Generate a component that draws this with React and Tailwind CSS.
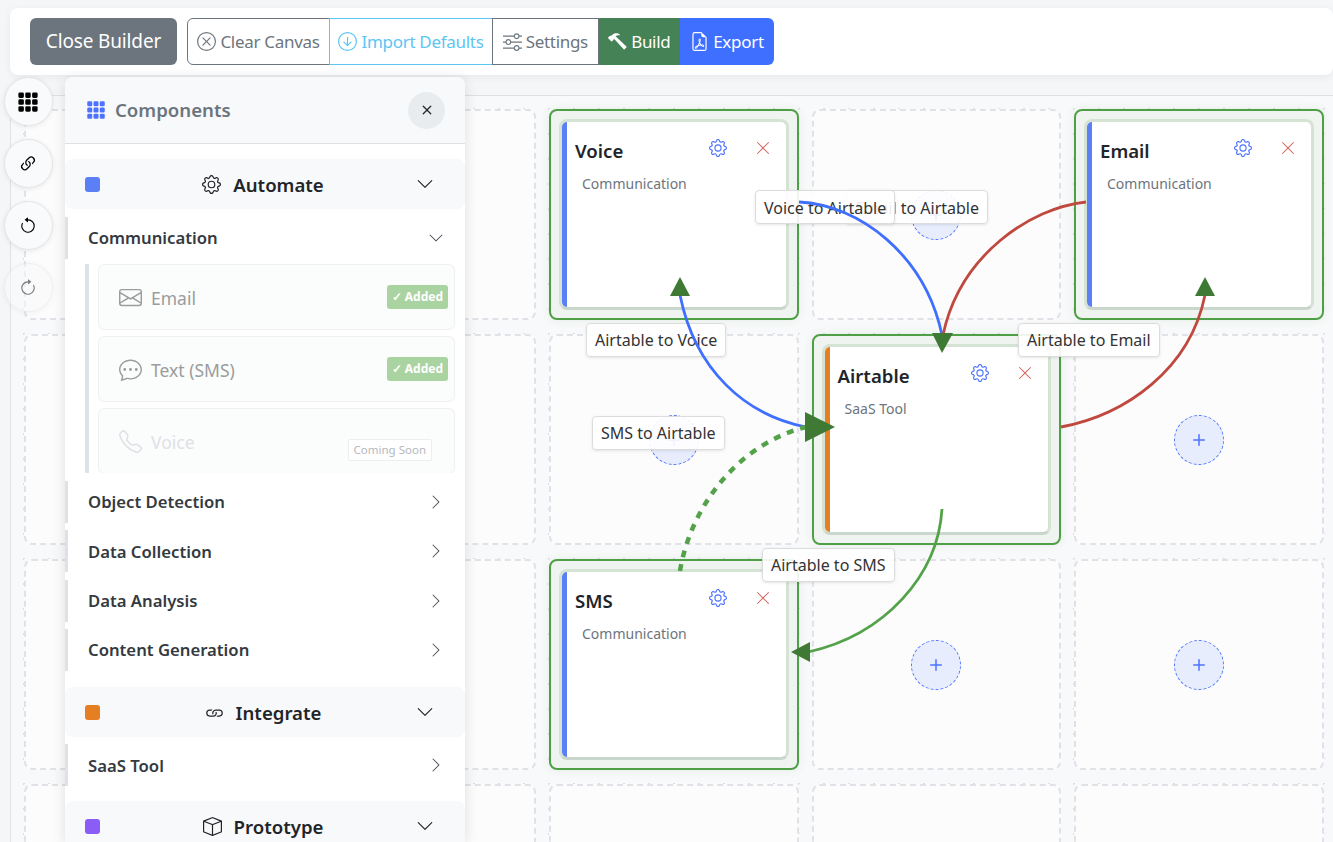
import React from 'react';
import {
  BsXCircle, BsArrowDownCircle, BsSliders, BsHammer, BsFileEarmarkPdf, BsGrid3X3GapFill,
  BsLink45Deg, BsArrowCounterclockwise, BsArrowClockwise, BsGear, BsX, BsChevronDown,
  BsChevronRight, BsEnvelope, BsChatDots, BsTelephone, BsLink, BsBox, BsPlus, BsXLg,
} from 'react-icons/bs';

const FONT = 'font-["Noto_Sans",sans-serif]';

// null = empty slot
const GRID = [
  [null, null, { name: 'Voice', cat: 'Communication', bar: 'bg-[#5b7ff5]' }, null, { name: 'Email', cat: 'Communication', bar: 'bg-[#5b7ff5]' }],
  [null, null, null, { name: 'Airtable', cat: 'SaaS Tool', bar: 'bg-[#e67e22]' }, null],
  [null, null, { name: 'SMS', cat: 'Communication', bar: 'bg-[#5b7ff5]' }, null, null],
  [null, null, null, null, null],
];

const LABELS = [
  { text: 'Email to Airtable', cls: 'right-[345px] top-[190px] pt-[6px] pb-[4px]' },
  { text: 'Voice to Airtable', cls: 'left-[755px] top-[190px] pt-[6px] pb-[4px]' },
  { text: 'Airtable to Voice', cls: 'left-[586px] top-[323px] pt-[5px] pb-[5px]' },
  { text: 'Airtable to Email', cls: 'left-[1018px] top-[323px] pt-[5px] pb-[5px]' },
  { text: 'SMS to Airtable', cls: 'left-[592px] top-[416px] pt-[5px] pb-[5px]' },
  { text: 'Airtable to SMS', cls: 'left-[762px] top-[548px] pt-[5px] pb-[5px]' },
];

function Slot({ node }) {
  if (!node) {
    return (
      <div className="flex items-center justify-center rounded-lg border-2 border-dashed border-[#e0e2e7] bg-[#fcfcfc]">
        <div className="flex h-[50px] w-[50px] items-center justify-center rounded-full border border-dashed border-[#4c72ff] bg-[#e7edfd] text-[#4c72ff]">
          <BsPlus className="h-6 w-6" />
        </div>
      </div>
    );
  }
  return (
    <div className="rounded-lg border-2 border-[#4f9f46] bg-[#eef3ee]/90 p-2 shadow-[0_0_8px_rgba(79,159,70,0.12)]">
      <div className="flex h-full overflow-hidden rounded-lg border-[3px] border-[#d4e3d4] border-b-[#c9d6cb] bg-white">
        <div className={`w-[5px] shrink-0 ${node.bar}`} />
        <div className="flex-1 pl-2 pr-[15px] pt-[14px]">
          <div className="flex items-start justify-between">
            <span className="text-[18.6px] font-semibold leading-[30px] text-[#212529]">{node.name}</span>
            <div className="flex items-center gap-[28px] pt-[3px]">
              <BsGear className="h-[18px] w-[18px] text-[#4c72ff]" />
              <BsXLg className="h-[16px] w-[16px] text-[#d4625c]" />
            </div>
          </div>
          <p className="mt-[8px] pl-[7px] text-[14px] leading-5 text-[#6c757d]">{node.cat}</p>
        </div>
      </div>
    </div>
  );
}

function SectionHeader({ color, Icon, title, iconCls }) {
  return (
    <div className="relative flex h-[50px] items-center rounded-lg bg-[#f8f9fa] pl-5 pr-[31px]">
      <span className={`h-[15px] w-[15px] rounded-[3px] ${color}`} />
      <div className="flex flex-1 items-center justify-center gap-3 pl-[10px] pt-px text-[18.6px] font-semibold text-[#212529]">
        <Icon className={iconCls} />
        {title}
      </div>
      <BsChevronDown className="h-[18px] w-[18px] text-[#212529]" />
    </div>
  );
}

function SubRow({ title, open }) {
  const Chevron = open ? BsChevronDown : BsChevronRight;
  return (
    <div className="flex h-[42px] items-center justify-between border-l-[3px] border-[#dee2e6] pl-5 pr-[21px] text-[16.7px] font-semibold text-[#343a40]">
      {title}
      <Chevron className="h-4 w-4 text-[#495057]" />
    </div>
  );
}

function ComponentItem({ Icon, name, badge, muted }) {
  return (
    <div className={`relative flex h-[66px] shrink-0 items-center rounded-md border border-[#eef0f1] bg-[#fbfcfc] pl-5 text-[17.5px] ${muted ? 'text-[#dfe1e6]' : 'text-[#9a9c9e]'}`}>
      <Icon className="mr-[9px] h-[23px] w-[23px]" />
      <span className="mt-[2px]">{name}</span>
      {badge && (
        <span className="absolute right-[6px] top-[20px] rounded-[3px] bg-[#aad3a2] px-[5px] py-[3px] text-[12px] font-bold leading-[18px] text-white">
          ✓ Added
        </span>
      )}
      {muted && (
        <span className="absolute right-[22px] top-[30px] rounded-[2px] border border-[#eceeef] bg-white px-[5px] text-[11.5px] leading-5 text-[#b5b8bb]">
          Coming Soon
        </span>
      )}
    </div>
  );
}

function Sidebar() {
  return (
    <aside className="absolute left-[65px] top-[77px] bottom-0 w-[400px] overflow-hidden rounded-t-lg bg-white shadow-[0_2px_14px_rgba(0,0,0,0.12)]">
      <div className="flex h-[67px] items-center justify-between border-b border-[#dee2e6] bg-[#f8f9fa] pl-[21px] pr-5">
        <div className="flex items-center gap-[9px] text-[18.6px] font-semibold text-[#6c757d]">
          <BsGrid3X3GapFill className="h-[20px] w-[20px] text-[#4c72ff]" />
          Components
        </div>
        <div className="flex h-[37px] w-[37px] items-center justify-center rounded-full bg-[#e9ecef] text-[#212529]">
          <BsX className="h-5 w-5" />
        </div>
      </div>
      <div className="pt-[15px]">
        <SectionHeader color="bg-[#5b7ff5]" Icon={BsGear} title="Automate" iconCls="h-[19px] w-[19px]" />
        <div className="pt-2">
          <SubRow title="Communication" open />
          <div className="ml-5 mt-[5px] flex h-[209px] flex-col gap-[6px] overflow-hidden border-l-[4px] border-[#dee2e6] pl-[9px] pr-[10px]">
            <ComponentItem Icon={BsEnvelope} name="Email" badge />
            <ComponentItem Icon={BsChatDots} name="Text (SMS)" badge />
            <ComponentItem Icon={BsTelephone} name="Voice" muted />
          </div>
          <div className="mt-[8px] flex flex-col gap-[7.3px]">
            <SubRow title="Object Detection" />
            <SubRow title="Data Collection" />
            <SubRow title="Data Analysis" />
            <SubRow title="Content Generation" />
          </div>
        </div>
      </div>
      <div className="mt-[16.6px]">
        <SectionHeader color="bg-[#e67e22]" Icon={BsLink} title="Integrate" iconCls="h-[19px] w-[19px]" />
        <div className="pt-[7px]">
          <SubRow title="SaaS Tool" />
        </div>
      </div>
      <div className="mt-[15px]">
        <SectionHeader color="bg-[#8b5cf6]" Icon={BsBox} title="Prototype" iconCls="h-[19px] w-[19px]" />
      </div>
    </aside>
  );
}

function RailButton({ Icon, cls, iconCls }) {
  return (
    <div className={`flex h-[49px] w-[49px] items-center justify-center rounded-full border border-[#e4e5e7] bg-[#f9fafb] shadow-[0_1px_5px_rgba(0,0,0,0.08)] ${cls}`}>
      <Icon className={iconCls} />
    </div>
  );
}

// connections, drawn in page coordinates
function Wires() {
  return (
    <svg className="pointer-events-none absolute left-0 top-0" width="1333" height="842" fill="none">
      <path d="M799 202 C860 205 925 255 942 335" stroke="#3f6fff" strokeWidth="2.8" />
      <path d="M1086 202 C1030 208 960 255 943 335" stroke="#c0493f" strokeWidth="2.8" />
      <path d="M806 427 C745 415 695 370 680 295" stroke="#3f6fff" strokeWidth="2.8" />
      <path d="M1061 427 C1125 415 1190 370 1205 295" stroke="#c0493f" strokeWidth="2.8" />
      <path d="M942 509 C938 575 885 635 808 652" stroke="#53a24a" strokeWidth="2.8" />
      <path d="M680 571 C690 510 735 445 806 427" stroke="#53a24a" strokeWidth="4.5" strokeDasharray="7 7" />
      <g fill="#3f7a35">
        <path d="M932 333 L953 333 L942 353 Z" />
        <path d="M670 296 L690 296 L680 277 Z" />
        <path d="M1195 296 L1215 296 L1205 277 Z" />
        <path d="M810 642 L810 662 L791 652 Z" />
        <path d="M805 412 L805 442 L835 427 Z" />
      </g>
    </svg>
  );
}

export default function App() {
  return (
    <div className={`relative h-screen w-full overflow-hidden bg-[#f5f6f8] ${FONT}`}>
      {/* Toolbar */}
      <div className="ml-2.5 mt-2 flex h-[67px] items-center rounded-lg bg-white pl-5 shadow-[0_2px_8px_rgba(0,0,0,0.06)]">
        <button className="h-[47px] w-[147px] rounded-md bg-[#6c757d] text-[19px] tracking-[-0.15px] text-white">Close Builder</button>
        <div className="ml-2.5 flex h-[47px] text-[17px] tracking-[-0.3px]">
          <button className="flex w-[143px] items-center justify-center gap-1 rounded-l-md border border-[#6c757d] text-[#6c757d]"><BsXCircle className="h-[19px] w-[19px]" />Clear Canvas</button>
          <button className="-ml-px flex w-[164px] items-center justify-center gap-1 border border-[#5cc5f2] text-[#5cc5f2]"><BsArrowDownCircle className="h-[19px] w-[19px]" />Import Defaults</button>
          <button className="-ml-px flex w-[106.6px] items-center justify-center gap-1 border border-[#6c757d] text-[#6c757d]"><BsSliders className="h-[19px] w-[19px]" />Settings</button>
          <button className="flex w-[81.4px] items-center justify-center gap-1 bg-[#458256] text-white"><BsHammer className="h-[19px] w-[19px]" />Build</button>
          <button className="flex w-[94px] items-center justify-center gap-1 rounded-r-md bg-[#3f6fff] text-white"><BsFileEarmarkPdf className="h-[19px] w-[19px]" />Export</button>
        </div>
      </div>

      {/* Canvas */}
      <div className="ml-2.5 mt-5 h-[760px] overflow-hidden rounded-tl-lg border-l border-t border-[#dee2e6] bg-[#f8f9fa] bg-[radial-gradient(#dcdee3_1px,transparent_1px)] bg-[size:25px_25px] p-[13px]">
        <div className="grid grid-cols-[repeat(5,249.5px)] auto-rows-[211px] gap-x-[13px] gap-y-[14px]">
          {GRID.flat().map((node, i) => <Slot key={i} node={node} />)}
        </div>
      </div>

      {LABELS.map(l => (
        <div key={l.text} className={`absolute rounded border border-[#dcdcdc] bg-white/90 px-2 text-[16px] leading-[22px] text-[#333] shadow-[0_1px_3px_rgba(0,0,0,0.1)] ${l.cls}`}>
          {l.text}
        </div>
      ))}
      <Wires />

      <Sidebar />

      {/* Tool rail */}
      <div className="absolute left-[3.5px] top-[77px] flex flex-col gap-[13px]">
        <RailButton Icon={BsGrid3X3GapFill} iconCls="h-[22px] w-[22px] text-black" />
        <RailButton Icon={BsLink45Deg} iconCls="h-[20px] w-[20px] text-black" />
        <RailButton Icon={BsArrowCounterclockwise} iconCls="h-[18px] w-[18px] text-black" />
        <RailButton Icon={BsArrowClockwise} cls="opacity-50" iconCls="h-[18px] w-[18px] text-black" />
      </div>
    </div>
  );
}
